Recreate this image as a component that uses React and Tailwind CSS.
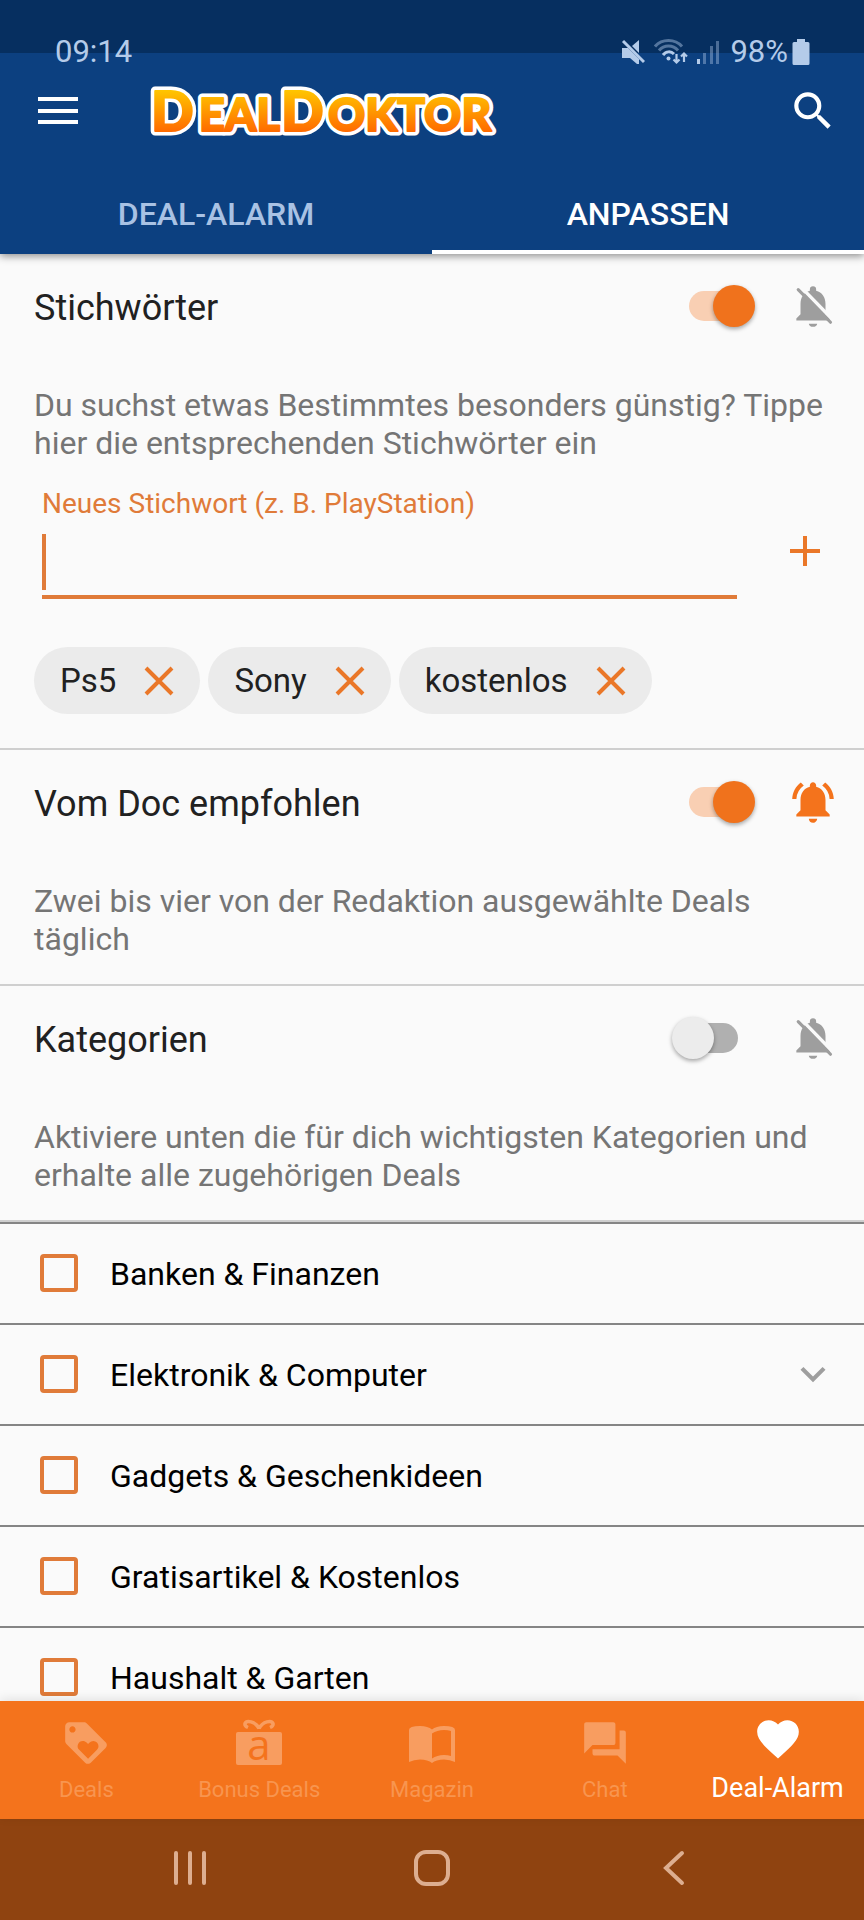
import React, { useState } from "react";
import {
  MdFavorite,
  MdForum,
  MdKeyboardArrowDown,
  MdLoyalty,
  MdNotificationsActive,
  MdSearch,
} from "react-icons/md";

const initialKeywords = ["Ps5", "Sony", "kostenlos"];

const categories = [
  { id: "banken", label: "Banken & Finanzen" },
  { id: "elektronik", label: "Elektronik & Computer", expandable: true },
  { id: "gadgets", label: "Gadgets & Geschenkideen" },
  { id: "gratis", label: "Gratisartikel & Kostenlos" },
  { id: "haushalt", label: "Haushalt & Garten" },
];

/* ---------- Icons ---------- */

const MuteIcon = () => (
  <svg width="24" height="26" viewBox="0 0 24 26" fill="currentColor">
    <path d="M1 9h6l11 11v5h-2l-7-6H1z" />
    <path d="M11 7l7-6v13z" />
    <path d="M2 2l21 21" stroke="currentColor" strokeWidth="3" />
  </svg>
);

const WifiIcon = () => (
  <svg width="34" height="26" viewBox="0 0 34 26" fill="none" stroke="currentColor">
    <g strokeWidth="3" opacity="0.45">
      <path d="M1 7.500C8-0.500 21-0.500 28 7.500" />
      <path d="M5 11.500C10 5.500 19 5.500 24 11.500" />
    </g>
    <path d="M9 16c3-4 8-4 11-1" strokeWidth="3" />
    <circle cx="14.500" cy="19.500" r="2" fill="currentColor" stroke="none" />
    <path d="M22.500 15v8M19.500 20.500l3 3 3-3M30 23v-8M27 17.500l3-3 3 3" strokeWidth="2.200" />
  </svg>
);

const SignalIcon = () => (
  <svg width="24" height="26" viewBox="0 0 24 26" fill="currentColor">
    <rect x="1" y="20" width="3" height="5" />
    <g opacity="0.4">
      <rect x="7" y="14" width="3" height="11" />
      <rect x="14" y="7" width="3" height="18" />
      <rect x="20" y="2" width="3" height="23" />
    </g>
  </svg>
);

const BatteryIcon = () => (
  <svg width="18" height="26" viewBox="0 0 18 26" fill="currentColor">
    <path d="M5 0h8v3h3q1.500 0 1.500 1.500v20q0 1.500-1.500 1.500H2q-1.500 0-1.500-1.500v-20Q.5 3 2 3h3z" />
  </svg>
);

const MenuIcon = () => (
  <svg width="40" height="28" viewBox="0 0 40 28" fill="currentColor">
    <path d="M0 0h40v4H0zM0 12h40v4H0zM0 23h40v4H0z" />
  </svg>
);

const BellOffIcon = () => (
  <svg width="50" height="50" viewBox="0 0 24 24" fill="currentColor">
    <path d="M12 22c1.100 0 2-.5 2-1.500h-4c0 1 .9 1.500 2 1.500zM18 16v-5c0-3.070-1.640-5.640-4.500-6.320V4a1.500 1.500 0 0 0-3 0v.68C7.630 5.360 6 7.920 6 11v5l-2 2v1h16v-1z" />
    <path d="M5.800 2.500L21.500 18.600" stroke="#fafafa" strokeWidth="1.600" />
    <path d="M4.900 4.100L20.400 19.800" stroke="currentColor" strokeWidth="1.500" strokeLinecap="round" />
  </svg>
);

const GiftCardIcon = () => (
  <svg width="50" height="50" viewBox="0 0 50 50" fill="currentColor" className="overflow-visible">
    <rect x="2" y="14" width="46" height="33" rx="2" />
    <path
      d="M25 10.500C21 3 12.500 2 11 5.500q-.5 2.500 3 4M25 10.500C29 3 37.500 2 39 5.500q.5 2.500-3 4"
      fill="none"
      stroke="currentColor"
      strokeWidth="3.500"
    />
    <text
      x="25"
      y="42"
      textAnchor="middle"
      fontFamily="Open Sans, sans-serif"
      fontSize="42"
      fontWeight="500"
      fill="#f4731c"
    >
      a
    </text>
  </svg>
);

const MagazineIcon = () => (
  <svg width="50" height="50" viewBox="0 0 50 50" fill="currentColor">
    <path d="M2 12q0-4 11-4 8 0 12 3.500Q29 8 37 8q11 0 11 4v32q-5-2.500-11-2.500-8 0-12 3.500-4-3.500-12-3.500-6 0-11 2.500z" />
    <path d="M25 15.500q5-3.500 12-3.500 4 0 7 1v25q-3-1-7-1-7 0-12 3.500z" fill="#f4731c" />
  </svg>
);

const CloseIcon = () => (
  <svg width="30" height="30" viewBox="0 0 30 30" fill="none">
    <path d="M2 2l26 26M28 2L2 28" stroke="currentColor" strokeWidth="4" />
  </svg>
);

const LogoLetters = () => (
  <>
    <tspan x="1">D</tspan>
    <tspan x="49" fontSize="45">EAL</tspan>
    <tspan x="131">D</tspan>
    <tspan x="178" fontSize="46">OKTOR</tspan>
  </>
);

const Logo = () => (
  <svg width="360" height="84" viewBox="0 0 360 84" role="img" aria-label="DealDoktor">
    <defs>
      <linearGradient id="logoFill" x1="0" y1="22" x2="0" y2="63" gradientUnits="userSpaceOnUse">
        <stop offset="0" stopColor="#ffc400" />
        <stop offset="1" stopColor="#ff6a00" />
      </linearGradient>
    </defs>
    <g fontFamily="Lato, sans-serif" fontSize="56" fontWeight="900" strokeLinejoin="round">
      <text y="62" fill="#fff" stroke="#fff" strokeWidth="9">
        <LogoLetters />
      </text>
      <text y="62" fill="url(#logoFill)" stroke="url(#logoFill)" strokeWidth="2" aria-hidden="true">
        <LogoLetters />
      </text>
    </g>
  </svg>
);

/* ---------- Controls ---------- */

const Switch = ({ label, checked, onChange }) => (
  <label className="relative flex h-[42px] w-[83px] items-center px-[17px]">
    <input
      type="checkbox"
      role="switch"
      aria-label={label}
      checked={checked}
      onChange={onChange}
      className="peer absolute inset-0 appearance-none outline-none"
    />
    <span className="h-[30px] w-full rounded-full bg-[#b0b0b0] peer-checked:bg-[#f9cfb3]" />
    <span className="absolute left-0 size-[42px] rounded-full bg-[#ececec] shadow-[0_2px_4px_rgba(0,0,0,0.35)] peer-checked:right-0 peer-checked:left-auto peer-checked:bg-[#f0721c]" />
  </label>
);

const Section = ({ title, text, active, notify, onToggle, children }) => (
  <section className="border-b-2 border-[#cfcfcf]">
    <div className="flex h-[104px] items-center pr-[26px] pl-[34px]">
      <h2 className="flex-1 pt-1 text-[36px] text-[#212121]">{title}</h2>
      <Switch label={title} checked={active} onChange={onToggle} />
      <button
        type="button"
        aria-label={`Benachrichtigungen ${title}`}
        className={`ml-[33px] ${notify ? "text-[#f4731c]" : "text-[#9e9e9e]"}`}
      >
        {notify ? <MdNotificationsActive size={50} /> : <BellOffIcon />}
      </button>
    </div>
    <p className="pt-7 pr-8 pb-[26px] pl-[34px] text-[32px] leading-[38px] text-[#757575]">{text}</p>
    {children}
  </section>
);

const NavItem = ({ icon, label, active }) => (
  <a
    href="#"
    aria-current={active ? "page" : undefined}
    className={`flex flex-1 flex-col items-center whitespace-nowrap ${
      active ? "pt-[13px] text-white" : "pt-[17px] text-[#f89d60]"
    }`}
  >
    {icon}
    <span className={active ? "mt-2 text-[27px] leading-8" : "mt-1.5 text-[22px] leading-8 text-[#f8954f]"}>
      {label}
    </span>
  </a>
);

export default function App() {
  const [keywords, setKeywords] = useState(initialKeywords);
  const [draft, setDraft] = useState("");
  const [enabled, setEnabled] = useState({ keywords: true, doc: true, categories: false });

  const toggle = (key) => setEnabled((prev) => ({ ...prev, [key]: !prev[key] }));

  const addKeyword = (e) => {
    e.preventDefault();
    if (!draft.trim()) return;
    setKeywords([...keywords, draft.trim()]);
    setDraft("");
  };

  return (
    <div className="flex h-screen flex-col overflow-hidden bg-[#fafafa] font-[Roboto,sans-serif]">
      <header className="relative z-10 shrink-0 bg-linear-to-b from-[#062f60] from-[53px] to-[#0c4080] to-[53px] shadow-[0_2px_8px_rgba(0,0,0,0.45)]">
        {/* Status bar */}
        <div className="flex h-[68px] items-end justify-between pr-[54px] pl-[55px] text-[31px] leading-8 text-[#b4cbe9]">
          <span>09:14</span>
          <div className="flex items-center">
            <MuteIcon />
            <span className="ml-[9px]">
              <WifiIcon />
            </span>
            <span className="ml-2">
              <SignalIcon />
            </span>
            <span className="ml-[10px]">98%</span>
            <span className="ml-1">
              <BatteryIcon />
            </span>
          </div>
        </div>

        {/* App bar */}
        <div className="flex h-[86px] items-center pr-[26px] pl-[38px] text-white">
          <button type="button" aria-label="Menü">
            <MenuIcon />
          </button>
          <span className="ml-[72px] flex-1">
            <Logo />
          </span>
          <button type="button" aria-label="Suche">
            <MdSearch size={50} />
          </button>
        </div>

        <nav className="flex pt-5 text-[32px] font-medium">
          <a href="#" className="flex h-20 flex-1 items-center justify-center text-[#a9c2e4]">
            DEAL-ALARM
          </a>
          <a
            href="#"
            aria-current="page"
            className="flex h-20 flex-1 items-center justify-center border-b-4 border-white pt-1 text-white"
          >
            ANPASSEN
          </a>
        </nav>
      </header>

      <main className="min-h-0 flex-1 overflow-hidden">
        <Section
          title="Stichwörter"
          text="Du suchst etwas Bestimmtes besonders günstig? Tippe hier die entsprechenden Stichwörter ein"
          active={enabled.keywords}
          onToggle={() => toggle("keywords")}
        >
          <form onSubmit={addKeyword} className="flex items-center pr-[44px] pl-[42px] text-[#e07b39]">
            <div className="flex flex-1 flex-col">
              <label htmlFor="keyword" className="text-[28px] leading-8">
                Neues Stichwort (z. B. PlayStation)
              </label>
              <div className="mt-[14px] flex h-[65px] items-start border-b-4 border-[#e07b39]">
                {!draft && <span className="h-[56px] w-1 bg-[#e07b39]" />}
                <input
                  id="keyword"
                  type="text"
                  value={draft}
                  onChange={(e) => setDraft(e.target.value)}
                  className="h-[56px] min-w-0 flex-1 bg-transparent text-[32px] text-[#212121] outline-none"
                />
              </div>
            </div>
            <button type="submit" aria-label="Hinzufügen" className="mt-[14px] ml-[53px] text-[#ea7728]">
              <svg width="30" height="30" viewBox="0 0 30 30">
                <path d="M15 0v30M0 15h30" stroke="currentColor" strokeWidth="4" />
              </svg>
            </button>
          </form>

          <ul className="flex flex-wrap gap-2 px-[34px] pt-12 pb-[34px]">
            {keywords.map((word) => (
              <li
                key={word}
                className="flex h-[67px] items-center gap-7 rounded-full bg-[#ebebeb] px-[26px] text-[33px] text-[#212121]"
              >
                {word}
                <button
                  type="button"
                  aria-label={`${word} entfernen`}
                  onClick={() => setKeywords(keywords.filter((k) => k !== word))}
                  className="text-[#ea7728]"
                >
                  <CloseIcon />
                </button>
              </li>
            ))}
          </ul>
        </Section>

        <Section
          title="Vom Doc empfohlen"
          text="Zwei bis vier von der Redaktion ausgewählte Deals täglich"
          active={enabled.doc}
          notify
          onToggle={() => toggle("doc")}
        />

        <Section
          title="Kategorien"
          text="Aktiviere unten die für dich wichtigsten Kategorien und erhalte alle zugehörigen Deals"
          active={enabled.categories}
          onToggle={() => toggle("categories")}
        />

        <ul>
          {categories.map(({ id, label, expandable }) => (
            <li
              key={id}
              className="flex h-[101px] items-center border-t-2 border-[#858585] pr-[26px] pb-0.5 pl-10 text-[32px] text-black"
            >
              <input
                id={id}
                type="checkbox"
                className="size-[38px] shrink-0 appearance-none rounded-[4px] border-4 border-[#e07b39] checked:bg-[#e07b39]"
              />
              <label htmlFor={id} className="flex-1 pt-0.5 pl-8">
                {label}
              </label>
              {expandable && (
                <button type="button" aria-label={`${label} aufklappen`} className="text-[#9e9e9e]">
                  <MdKeyboardArrowDown size={50} />
                </button>
              )}
            </li>
          ))}
        </ul>
      </main>

      {/* Bottom navigation */}
      <nav className="relative z-10 flex h-[118px] shrink-0 bg-[#f4731c] shadow-[0_-2px_10px_rgba(0,0,0,0.1)]">
        <NavItem icon={<MdLoyalty size={50} />} label="Deals" />
        <NavItem icon={<GiftCardIcon />} label="Bonus Deals" />
        <NavItem icon={<MagazineIcon />} label="Magazin" />
        <NavItem icon={<MdForum size={50} />} label="Chat" />
        <NavItem icon={<MdFavorite size={50} />} label="Deal-Alarm" active />
      </nav>

      {/* System buttons */}
      <div className="flex h-[101px] shrink-0 items-center justify-around bg-[#8f4310] px-[70px] pb-1 text-[#ddae90]">
        <button type="button" aria-label="Letzte Apps">
          <svg width="36" height="36" viewBox="0 0 36 36" stroke="currentColor" strokeWidth="4" strokeLinecap="round">
            <path d="M4 3v30M18 3v30M32 3v30" />
          </svg>
        </button>
        <button type="button" aria-label="Startseite">
          <svg width="38" height="38" viewBox="0 0 38 38" fill="none">
            <rect x="3" y="3" width="32" height="32" rx="10" stroke="currentColor" strokeWidth="4" />
          </svg>
        </button>
        <button type="button" aria-label="Zurück">
          <svg width="36" height="36" viewBox="0 0 36 36" fill="none">
            <path d="M26 3L10 18l16 15" stroke="currentColor" strokeWidth="4" strokeLinecap="round" />
          </svg>
        </button>
      </div>
    </div>
  );
}
